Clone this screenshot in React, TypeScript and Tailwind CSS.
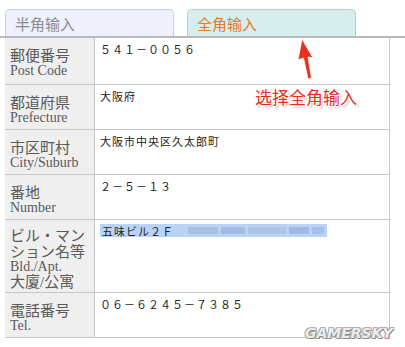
import React from 'react';

interface IRow {
  labels: string[];
  value: React.ReactNode;
  height: string;
}

const serif = { fontFamily: '"Liberation Serif", "Noto Sans CJK JP", serif' };

const rows: IRow[] = [
  { labels: ['郵便番号', 'Post Code'], value: '５４１－００５６', height: 'h-[46px]' },
  { labels: ['都道府県', 'Prefecture'], value: '大阪府', height: 'h-[45px]' },
  { labels: ['市区町村', 'City/Suburb'], value: '大阪市中央区久太郎町', height: 'h-[45px]' },
  { labels: ['番地', 'Number'], value: '２－５－１３', height: 'h-[45px]' },
  {
    labels: ['ビル・マン', 'ション名等', 'Bld./Apt.', '大廈/公寓'],
    value: (
      <span className="flex items-center h-[13px] bg-[#b9d3f6] w-[227px]">
        <span className="pl-[2px]">五味ビル２Ｆ</span>
        <span className="ml-[14px] flex h-[7px] gap-[3px]">
          <span className="w-[30px] bg-[#a9c1e6]" />
          <span className="w-[24px] bg-[#a2bce4]" />
          <span className="w-[38px] bg-[#adc4e8]" />
          <span className="w-[20px] bg-[#9fb9e2]" />
          <span className="w-[12px] bg-[#a8c0e6]" />
        </span>
      </span>
    ),
    height: 'h-[73px]',
  },
  { labels: ['電話番号', 'Tel.'], value: '０６－６２４５－７３８５', height: 'h-[45px]' },
];

const isCjk = (s: string) => /[ぁ-んァ-ン一-龥]/.test(s);

const App: React.FC = () => {
  return (
    <div className="relative w-[405px] h-[347px] bg-white overflow-hidden" style={serif}>
      {/* tabs */}
      <div className="flex pt-[9px] pl-[5px] gap-[13px]">
        <div className="w-[169px] h-[27px] rounded-t-[5px] border border-b-0 border-[#c9cbe0] bg-[#eef0fb] flex items-center pl-[9px] pt-[3px] text-[15px] text-[#8a8a92]" style={{ fontFamily: '"Noto Sans CJK SC", sans-serif' }}>
          半角输入
        </div>
        <div className="w-[169px] h-[27px] rounded-t-[5px] border border-b-0 border-[#b8cccc] bg-[#d7eeee] flex items-center pl-[9px] pt-[3px] text-[15px] text-[#e57b22]" style={{ fontFamily: '"Noto Sans CJK SC", sans-serif' }}>
          全角输入
        </div>
      </div>
      <div className="h-[2px] bg-[#b9b9b9]" />

      {/* table */}
      <div className="ml-[5px] w-[385px] border-r border-b border-[#c6c6c6]">
        {rows.map((row, i) => (
          <div key={i} className={`flex ${row.height} ${i > 0 ? 'border-t border-[#c6c6c6]' : ''}`}>
            <div className={`w-[90px] shrink-0 bg-[#efefef] border-r border-[#c6c6c6] pl-[5px] ${row.labels.length > 2 ? 'pt-[8px]' : 'pt-[10px]'} text-[#5a5a5a]`}>
              {row.labels.map((l, j) => (
                <div key={j} className={isCjk(l) ? 'text-[15px] leading-[16px]' : 'text-[14px] leading-[14px]'}>
                  {l}
                </div>
              ))}
            </div>
            <div className="flex-1 pl-[5px] pt-[4px] text-[11px] leading-[14px] text-[#222] tracking-[1px]" style={{ fontFamily: '"Noto Sans CJK JP", serif' }}>
              {row.value}
            </div>
          </div>
        ))}
      </div>

      {/* annotation arrow */}
      <svg className="absolute left-[290px] top-[36px]" width="30" height="46" viewBox="0 0 30 46">
        <path d="M12 3 L23 22 L18 21 L21.5 42 L18 43 L13.5 22 L8 24 Z" fill="#e8301c" stroke="#fff" strokeWidth="0.8" />
      </svg>
      <div
        className="absolute left-[255px] top-[86px] text-[17px] leading-[22px] text-[#e2301e]"
        style={{ fontFamily: '"Noto Sans CJK SC", sans-serif', textShadow: '1px 1px 0 #fff, -1px -1px 0 #fff, 1px -1px 0 #fff, -1px 1px 0 #fff, 2px 2px 2px rgba(0,0,0,0.3)' }}
      >
        选择全角输入
      </div>

      {/* watermark */}
      <div
        className="absolute left-[305px] top-[325px] text-[14px] leading-[17px] font-bold italic text-[#ececec]"
        style={{ fontFamily: '"DejaVu Sans", sans-serif', textShadow: '1px 1px 0 #8a8a8a, -1px -1px 0 #b0b0b0, 1px -1px 0 #b0b0b0, -1px 1px 0 #b0b0b0' }}
      >
        GAMERSKY
      </div>
    </div>
  );
};

export default App;
